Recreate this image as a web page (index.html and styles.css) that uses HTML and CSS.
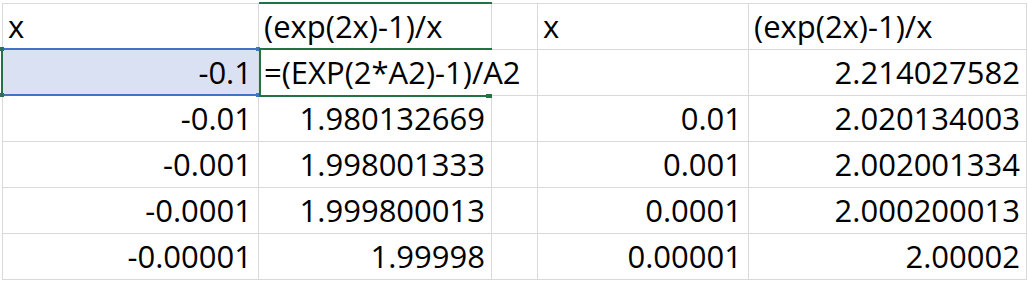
FILE: index.html
```html
<!DOCTYPE html>
<html lang="en">
<head>
<meta charset="utf-8">
<title>Sheet</title>
<link rel="stylesheet" href="styles.css">
</head>
<body>
<div class="sheet">
  <div class="cell txt">x</div>
  <div class="cell txt b1">(exp(2x)-1)/x</div>
  <div class="cell"></div>
  <div class="cell txt">x</div>
  <div class="cell txt">(exp(2x)-1)/x</div>

  <div class="cell num ref">-0.1<span class="hdl h-tl"></span><span class="hdl h-tr"></span><span class="hdl h-bl"></span><span class="hdl h-br"></span></div>
  <div class="cell txt edit">=(EXP(2*A2)-1)/A2<span class="fill"></span></div>
  <div class="cell"></div>
  <div class="cell"></div>
  <div class="cell num">2.214027582</div>

  <div class="cell num">-0.01</div>
  <div class="cell num">1.980132669</div>
  <div class="cell"></div>
  <div class="cell num">0.01</div>
  <div class="cell num">2.020134003</div>

  <div class="cell num">-0.001</div>
  <div class="cell num">1.998001333</div>
  <div class="cell"></div>
  <div class="cell num">0.001</div>
  <div class="cell num">2.002001334</div>

  <div class="cell num">-0.0001</div>
  <div class="cell num">1.999800013</div>
  <div class="cell"></div>
  <div class="cell num">0.0001</div>
  <div class="cell num">2.000200013</div>

  <div class="cell num">-0.00001</div>
  <div class="cell num">1.99998</div>
  <div class="cell"></div>
  <div class="cell num">0.00001</div>
  <div class="cell num">2.00002</div>
</div>
</body>
</html>
```
FILE: styles.css
```css
html, body {
  margin: 0;
  padding: 0;
  background: #fff;
  overflow: hidden;
}

body {
  font-family: "Open Sans", "Liberation Sans", sans-serif;
  font-size: 31px;
  color: #000;
}

.sheet {
  display: grid;
  grid-template-columns: 256px 233px 46px 211px 278px;
  grid-auto-rows: 46px;
  margin: 3px 0 0 2px;
  border-top: 1px solid #d9d9d9;
  border-left: 1px solid #d9d9d9;
  width: max-content;
}

.cell {
  box-sizing: border-box;
  border-right: 1px solid #d9d9d9;
  border-bottom: 1px solid #d9d9d9;
  background: #fff;
  line-height: 45px;
  white-space: nowrap;
  padding: 0 6px 0 5px;
}

.txt { text-align: left; }
.num { text-align: right; }

.b1 {
  box-shadow: 0 -2px 0 #217346;
}

/* referenced cell A2 */
.ref {
  position: relative;
  background: #d9e1f2;
}
.ref::before {
  content: "";
  position: absolute;
  top: -2px;
  bottom: -1px;
  left: -2px;
  right: -1px;
  border-top: 2px solid #4472c4;
  border-bottom: 2px solid #4472c4;
  border-left: 2px solid #217346;
}
.hdl {
  position: absolute;
  width: 4px;
  height: 4px;
  background: #4472c4;
}
.h-tl { left: -3px; top: -3px; background: #2f6f5a; }
.h-bl { left: -3px; bottom: -2px; background: #2f6f5a; }
.h-tr { right: -2px; top: -3px; }
.h-br { right: -2px; bottom: -2px; }

/* active editing cell B2 */
.edit {
  position: relative;
  z-index: 1;
  overflow: visible;
  border-right-color: #fff;
  padding-left: 5px;
}
.edit::before {
  content: "";
  position: absolute;
  top: -2px;
  left: 0;
  right: -1px;
  height: 2px;
  background: #217346;
}
.edit::after {
  content: "";
  position: absolute;
  top: 0;
  left: 0;
  bottom: -2px;
  right: 4px;
  border-left: 2px solid #217346;
  border-bottom: 2px solid #217346;
}
.fill {
  position: absolute;
  right: -1px;
  bottom: -3px;
  width: 6px;
  height: 4px;
  background: #217346;
  border-left: 1px solid #fff;
}
```
